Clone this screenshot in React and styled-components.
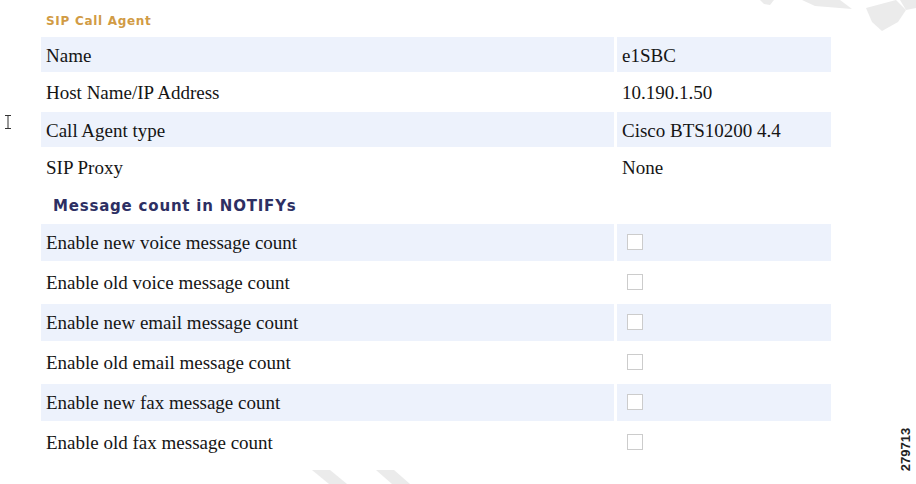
import React from 'react';
import styled, { createGlobalStyle } from 'styled-components';

const GlobalStyle = createGlobalStyle`
  html, body {
    margin: 0;
    padding: 0;
    background: #ffffff;
  }
  body {
    width: 916px;
    height: 484px;
    overflow: hidden;
    position: relative;
    font-family: "Liberation Serif", "Times New Roman", serif;
  }
`;

const Page = styled.div`
  position: relative;
  width: 916px;
  height: 484px;
  padding: 13px 0 0 41px;
  box-sizing: border-box;
`;

const Title = styled.div`
  font-family: "DejaVu Sans", Verdana, sans-serif;
  font-weight: bold;
  font-size: 12px;
  letter-spacing: 0.7px;
  line-height: 16px;
  color: #d19b45;
  padding-left: 5px;
  margin-bottom: 8px;
`;

const SubTitle = styled.div`
  font-family: "DejaVu Sans", Verdana, sans-serif;
  font-weight: bold;
  font-size: 15px;
  letter-spacing: 0.8px;
  line-height: 39px;
  height: 39px;
  padding-top: 2px;
  box-sizing: border-box;
  color: #2d2f63;
  padding-left: 12px;
`;

const Rows = styled.div`
  display: flex;
  flex-direction: column;
  gap: ${p => p.$gap}px;
  width: 790px;
`;

const Row = styled.div`
  display: grid;
  grid-template-columns: 573px 214px;
  column-gap: 3px;
  height: ${p => p.$h}px;
`;

const Cell = styled.div`
  display: flex;
  align-items: center;
  padding-left: ${p => (p.$box ? 10 : 5)}px;
  padding-top: ${p => (p.$box ? 0 : 2)}px;
  background: ${p => (p.$shaded ? '#edf2fc' : 'transparent')};
  font-size: 19px;
  color: #151515;
`;

const Check = styled.span`
  display: inline-block;
  width: 16px;
  height: 16px;
  box-sizing: border-box;
  border: 1px solid #cccccc;
  background: #ffffff;
`;

const Watermark = styled.svg`
  position: absolute;
  left: 0;
  top: 0;
  pointer-events: none;
`;

const FigureId = styled.div`
  position: absolute;
  left: 880px;
  top: 442px;
  width: 50px;
  transform: rotate(-90deg);
  font-family: "Liberation Sans", Arial, sans-serif;
  font-size: 13px;
  font-weight: bold;
  color: #222;
  text-align: center;
`;

const Cursor = styled.svg`
  position: absolute;
  left: 3px;
  top: 114px;
`;

const agent = [
  ['Name', 'e1SBC'],
  ['Host Name/IP Address', '10.190.1.50'],
  ['Call Agent type', 'Cisco BTS10200 4.4'],
  ['SIP Proxy', 'None'],
];

const counts = [
  'Enable new voice message count',
  'Enable old voice message count',
  'Enable new email message count',
  'Enable old email message count',
  'Enable new fax message count',
  'Enable old fax message count',
];

export default function App() {
  return (
    <Page>
      <GlobalStyle />
      <Title>SIP Call Agent</Title>
      <Rows $gap={2.5}>
        {agent.map(([label, value], i) => (
          <Row key={label} $h={35}>
            <Cell $shaded={i % 2 === 0}>{label}</Cell>
            <Cell $shaded={i % 2 === 0}>{value}</Cell>
          </Row>
        ))}
      </Rows>
      <SubTitle>Message count in NOTIFYs</SubTitle>
      <Rows $gap={3}>
        {counts.map((label, i) => (
          <Row key={label} $h={37}>
            <Cell $shaded={i % 2 === 0}>{label}</Cell>
            <Cell $shaded={i % 2 === 0} $box>
              <Check />
            </Cell>
          </Row>
        ))}
      </Rows>

      <Watermark width="916" height="484" viewBox="0 0 916 484">
        <g fill="#ebebeb">
          <polygon points="760,0 774,0 770,5 764,4" />
          <polygon points="802,0 840,0 852,9 815,6" />
          <polygon points="866,8 896,0 906,10 898,22 882,31 872,22" />
          <polygon points="900,0 916,0 916,8 906,10" />
          <polygon points="312,470 330,470 347,484 329,484" />
          <polygon points="376,470 394,470 410,484 392,484" />
        </g>
      </Watermark>

      <Cursor width="10" height="16" viewBox="0 0 10 16">
        <path d="M2 1.5h6M5 1.5v13M2 14.5h6" stroke="#333" strokeWidth="1" fill="none" />
      </Cursor>

      <FigureId>279713</FigureId>
    </Page>
  );
}
